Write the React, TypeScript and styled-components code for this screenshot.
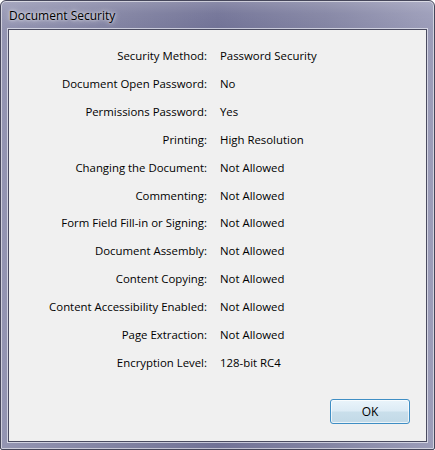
import React from "react";
import styled, { createGlobalStyle } from "styled-components";

const GlobalStyle = createGlobalStyle`
  html, body {
    margin: 0;
    padding: 0;
    background: #ffffff;
  }
  body {
    font-family: "Open Sans", "Noto Sans", sans-serif;
  }
`;

const Window = styled.div`
  width: 435px;
  height: 450px;
  box-sizing: border-box;
  display: flex;
  flex-direction: column;
  border: 1px solid #45465a;
  border-radius: 6px 6px 2px 2px;
  background: linear-gradient(
      90deg,
      #9495b2 0%,
      #7f80a0 30%,
      #717296 50%,
      #8384a3 75%,
      #9c9db9 100%
    );
  box-shadow: inset 0 0 0 1px rgba(255, 255, 255, 0.55);
  overflow: hidden;
`;

const TitleBar = styled.div`
  height: 28px;
  display: flex;
  align-items: center;
  padding-left: 8px;
  background: linear-gradient(
    180deg,
    rgba(255, 255, 255, 0.18) 0%,
    rgba(255, 255, 255, 0.05) 45%,
    rgba(0, 0, 0, 0) 100%
  );
`;

const Title = styled.span`
  font-family: "Open Sans", "Noto Sans", sans-serif;
  font-size: 12px;
  color: #000000;
  text-shadow: 0 0 6px rgba(255, 255, 255, 0.9), 0 0 3px rgba(255, 255, 255, 0.8);
`;

const Client = styled.div`
  flex: 1;
  margin: 0 7px 7px 7px;
  border: 1px solid #4a4b60;
  box-shadow: 0 0 0 1px rgba(235, 236, 245, 0.7);
  background: #f0f0f0;
  display: flex;
  flex-direction: column;
  padding: 12px 0 0 0;
`;

const Grid = styled.div`
  display: grid;
  grid-template-columns: 198px 1fr;
  column-gap: 13px;
  grid-auto-rows: 27.85px;
  font-size: 11.4px;
  color: #000000;
`;

const Label = styled.div`
  text-align: right;
  display: flex;
  align-items: center;
  justify-content: flex-end;
  white-space: nowrap;
`;

const Value = styled.div`
  display: flex;
  align-items: center;
  white-space: nowrap;
`;

const Footer = styled.div`
  margin-top: auto;
  display: flex;
  justify-content: flex-end;
  padding: 0 16px 17px 0;
`;

const Button = styled.button`
  width: 80px;
  height: 25px;
  box-sizing: border-box;
  border: 1px solid #3f8ec4;
  border-radius: 3px;
  background: linear-gradient(180deg, #eaf4fb 0%, #dcebf5 48%, #c9dfeb 52%, #c2d9e7 100%);
  box-shadow: inset 0 0 0 1px rgba(255, 255, 255, 0.7);
  font-family: "Open Sans", "Noto Sans", sans-serif;
  font-size: 12px;
  color: #000000;
  padding: 0;
`;

const rows: [string, string][] = [
  ["Security Method:", "Password Security"],
  ["Document Open Password:", "No"],
  ["Permissions Password:", "Yes"],
  ["Printing:", "High Resolution"],
  ["Changing the Document:", "Not Allowed"],
  ["Commenting:", "Not Allowed"],
  ["Form Field Fill-in or Signing:", "Not Allowed"],
  ["Document Assembly:", "Not Allowed"],
  ["Content Copying:", "Not Allowed"],
  ["Content Accessibility Enabled:", "Not Allowed"],
  ["Page Extraction:", "Not Allowed"],
  ["Encryption Level:", "128-bit RC4"],
];

export default function App() {
  return (
    <>
      <GlobalStyle />
      <Window>
        <TitleBar>
          <Title>Document Security</Title>
        </TitleBar>
        <Client>
          <Grid>
            {rows.map(([label, value]) => (
              <React.Fragment key={label}>
                <Label>{label}</Label>
                <Value>{value}</Value>
              </React.Fragment>
            ))}
          </Grid>
          <Footer>
            <Button>OK</Button>
          </Footer>
        </Client>
      </Window>
    </>
  );
}
